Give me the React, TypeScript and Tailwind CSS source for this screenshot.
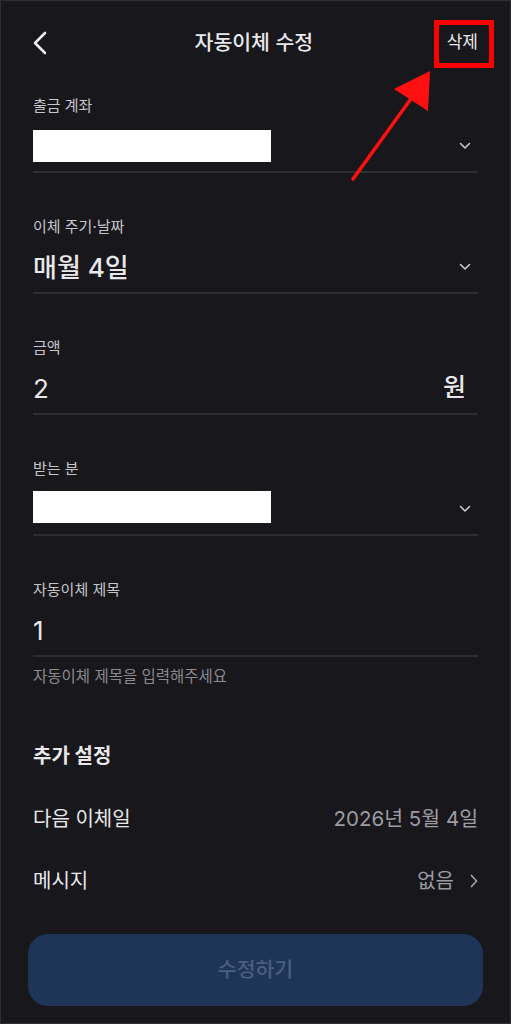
import React from 'react';

const FONT = { fontFamily: 'Inter, "Noto Sans CJK KR", "Noto Sans", sans-serif' };

function ChevronDown() {
  return (
    <svg width="12" height="8" viewBox="0 0 12 8" fill="none">
      <path d="M1.5 1.5 L6 6 L10.5 1.5" stroke="#c9c9cd" strokeWidth="1.6" strokeLinecap="round" strokeLinejoin="round" />
    </svg>
  );
}

function Field({ label, children, right }: { label: string; children: React.ReactNode; right?: React.ReactNode }) {
  return (
    <div>
      <div className="h-[20px] flex items-center text-[15px] text-[#c6c6ca]">{label}</div>
      <div className="mt-[10px] h-[40px] flex items-center justify-between">
        {children}
        {right}
      </div>
      <div className="mt-[5px] h-[2px] bg-[#2d2e34]" />
    </div>
  );
}

export default function App() {
  return (
    <div className="relative w-[511px] h-[1024px] overflow-hidden bg-[#17171c] text-[#e8e8ea] border border-[#2e2e33]" style={FONT}>
      {/* Header */}
      <div className="h-[84px] flex items-center justify-between px-[32px]">
        <svg width="14" height="24" viewBox="0 0 14 24" fill="none">
          <path d="M12 2 L2 12 L12 22" stroke="#ececee" strokeWidth="2.6" strokeLinecap="round" strokeLinejoin="round" />
        </svg>
        <div className="text-[20.5px] font-medium ml-[14px]">자동이체 수정</div>
        <div className="text-[17px]">삭제</div>
      </div>

      <div className="mt-[11px] px-[32px]">
        <Field label="출금 계좌" right={<div className="pr-[7px]"><ChevronDown /></div>}>
          <div className="w-[238px] h-[32px] bg-white" />
        </Field>

        <div className="mt-[44px]">
          <Field label="이체 주기·날짜" right={<div className="pr-[7px]"><ChevronDown /></div>}>
            <div className="text-[26px] font-medium">매월 4일</div>
          </Field>
        </div>

        <div className="mt-[44px]">
          <Field label="금액" right={<div className="text-[25px] font-medium pr-[12px]">원</div>}>
            <div className="text-[26px]">2</div>
          </Field>
        </div>

        <div className="mt-[44px]">
          <Field label="받는 분" right={<div className="pr-[7px]"><ChevronDown /></div>}>
            <div className="w-[238px] h-[32px] bg-white -mt-[4px]" />
          </Field>
        </div>

        <div className="mt-[44px]">
          <Field label="자동이체 제목">
            <div className="text-[26px]">1</div>
          </Field>
        </div>

        <div className="mt-[10px] h-[20px] flex items-center text-[15.5px] text-[#8a8a8f]">자동이체 제목을 입력해주세요</div>

        <div className="mt-[56px] h-[26px] flex items-center text-[20px] font-bold">추가 설정</div>

        <div className="mt-[19px]">
          <div className="h-[62px] flex items-center justify-between">
            <span className="text-[20px]">다음 이체일</span>
            <span className="text-[20.5px] text-[#9c9ca1]">2026년 5월 4일</span>
          </div>
          <div className="h-[62px] flex items-center justify-between">
            <span className="text-[20px]">메시지</span>
            <span className="flex items-center gap-[16px] text-[20px] text-[#9c9ca1]">
              없음
              <svg width="8" height="14" viewBox="0 0 8 14" fill="none">
                <path d="M1.5 1.5 L6.5 7 L1.5 12.5" stroke="#a0a0a5" strokeWidth="1.7" strokeLinecap="round" strokeLinejoin="round" />
              </svg>
            </span>
          </div>
        </div>
      </div>

      <div className="mt-[22px] mx-[27px]">
        <button className="w-full h-[72px] rounded-[20px] bg-[#1f3557] text-[20.5px] font-medium text-[#4a5f82]">수정하기</button>
      </div>

      {/* Annotation overlay */}
      <div className="absolute left-[433px] top-[19px] w-[60px] h-[48px] border-[5px] border-[#ff0000]" />
      <svg className="absolute left-0 top-0" width="511" height="200" viewBox="0 0 511 200">
        <line x1="352" y1="178" x2="412" y2="95" stroke="#ff1010" strokeWidth="3.5" strokeLinecap="round" />
        <polygon points="429,70 393,88 427,110" fill="#ff1010" />
      </svg>
    </div>
  );
}
